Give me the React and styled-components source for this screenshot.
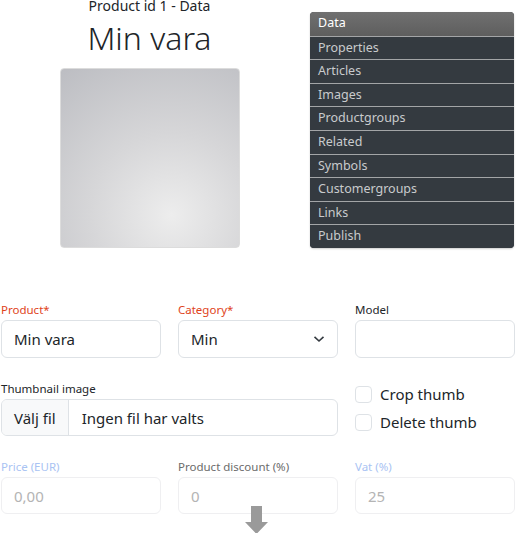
import React from 'react'
import styled, { createGlobalStyle } from 'styled-components'

const Global = createGlobalStyle`
    body {
        margin: 0;
        background: #fff;
        font-family: "Noto Sans", "Open Sans", sans-serif;
        color: #212529;
    }
`

const Page = styled.div`
    width: 514px;
    padding-left: 1px;
`

const Top = styled.div`
    display: grid;
    grid-template-columns: 297px 204px;
    column-gap: 12px;
`

const Head = styled.div`
    display: flex;
    flex-direction: column;
    align-items: center;
`

const Sub = styled.div`
    font-size: 14px;
    line-height: 17px;
    margin-top: -3px;
`

const Title = styled.h1`
    margin: 4px 0 0;
    font-size: 32px;
    font-weight: 300;
    line-height: 40px;
`

const Thumb = styled.div`
    width: 178px;
    height: 178px;
    margin-top: 10px;
    border: 1px solid #dcdcdc;
    border-radius: 4px;
    background: radial-gradient(circle at 62% 82%, #ededed 0%, #d6d6d8 45%, #bcbdc2 100%);
`

const Nav = styled.ul`
    list-style: none;
    margin: 12px 0 0;
    padding: 0;
    border-radius: 4px;
    overflow: hidden;
    background: #343a40;
    box-shadow: 0 1px 2px rgba(0,0,0,.2);
    align-self: start;
`

const NavItem = styled.li`
    height: 22.6px;
    line-height: 22.6px;
    padding-left: 8px;
    font-size: 12.5px;
    color: ${p => p.active ? '#fff' : '#c9cbcd'};
    background: ${p => p.active ? 'linear-gradient(#707070, #5e5e5e)' : '#343a40'};
    border-top: ${p => p.first ? 'none' : '1px solid #a3a5a7'};
    &:first-child{
        height: 23.6px;
    }
`

const Form = styled.div`
    margin-top: 54px;
    display: grid;
    grid-template-columns: repeat(3, 1fr);
    column-gap: 17px;
`

const Field = styled.div`
    grid-column: span ${p => p.span || 1};
    margin-bottom: ${p => p.mb ?? 23}px;
`

const Label = styled.div`
    font-size: 11.5px;
    line-height: 16px;
    margin-bottom: 2px;
    color: ${p => p.color || '#212529'};
`

const Input = styled.div`
    box-sizing: border-box;
    height: ${p => p.h || 38}px;
    border: 1px solid ${p => p.faded ? '#efeff1' : '#dee2e6'};
    border-radius: 6px;
    display: flex;
    align-items: center;
    padding: 0 12px;
    font-size: 15px;
    color: ${p => p.faded ? '#b4b4b4' : '#212529'};
    justify-content: space-between;
`

const FileBox = styled.div`
    box-sizing: border-box;
    height: 37px;
    border: 1px solid #dee2e6;
    border-radius: 6px;
    display: flex;
    overflow: hidden;
    font-size: 15px;
`

const FileBtn = styled.div`
    background: #f8f9fa;
    border-right: 1px solid #dee2e6;
    padding: 0 12px;
    display: flex;
    align-items: center;
`

const FileText = styled.div`
    padding-left: 13px;
    display: flex;
    align-items: center;
`

const Checks = styled.div`
    display: flex;
    flex-direction: column;
    gap: 6px;
    padding-top: 2px;
`

const Check = styled.label`
    display: flex;
    align-items: center;
    gap: 8px;
    font-size: 15px;
    line-height: 22px;
`

const Box = styled.span`
    box-sizing: border-box;
    width: 17px;
    height: 17px;
    border: 1px solid #dee2e6;
    border-radius: 4px;
`

const ArrowRow = styled.div`
    display: flex;
    justify-content: center;
    margin-top: -8px;
    padding-right: 2px;
    position: relative;
`

const Chevron = () => (
    <svg width="12" height="8" viewBox="0 0 12 8">
        <path d="M1.5 1.8 L6 6 L10.5 1.8" fill="none" stroke="#343a40" strokeWidth="1.6" />
    </svg>
)

const tabs = ['Data', 'Properties', 'Articles', 'Images', 'Productgroups', 'Related', 'Symbols', 'Customergroups', 'Links', 'Publish']

const App = () => {
    return(
        <Page>
            <Global />
            <Top>
                <Head>
                    <Sub>Product id 1 - Data</Sub>
                    <Title>Min vara</Title>
                    <Thumb />
                </Head>
                <Nav>
                    {tabs.map((t, i) => (
                        <NavItem key={t} active={i === 0} first={i === 0}>{t}</NavItem>
                    ))}
                </Nav>
            </Top>

            <Form>
                <Field>
                    <Label color="#e0431a">Product*</Label>
                    <Input>Min vara</Input>
                </Field>
                <Field>
                    <Label color="#e0431a">Category*</Label>
                    <Input>Min <Chevron /></Input>
                </Field>
                <Field>
                    <Label>Model</Label>
                    <Input />
                </Field>

                <Field span={2}>
                    <Label>Thumbnail image</Label>
                    <FileBox>
                        <FileBtn>Välj fil</FileBtn>
                        <FileText>Ingen fil har valts</FileText>
                    </FileBox>
                </Field>
                <Field>
                    <Checks>
                        <Check><Box />Crop thumb</Check>
                        <Check><Box />Delete thumb</Check>
                    </Checks>
                </Field>

                <Field mb={0}>
                    <Label color="#a9c3f3">Price (EUR)</Label>
                    <Input faded h={37}>0,00</Input>
                </Field>
                <Field mb={0}>
                    <Label color="#6b6b6b">Product discount (%)</Label>
                    <Input faded h={37}>0</Input>
                </Field>
                <Field mb={0}>
                    <Label color="#a9c3f3">Vat (%)</Label>
                    <Input faded h={37}>25</Input>
                </Field>
            </Form>

            <ArrowRow>
                <svg width="24" height="28" viewBox="0 0 24 28">
                    <path d="M6 0 H17 V16 H23 L11.5 28 L0 16 H6 Z" fill="#9a9a9a" />
                </svg>
            </ArrowRow>
        </Page>
    )
}

export default App
